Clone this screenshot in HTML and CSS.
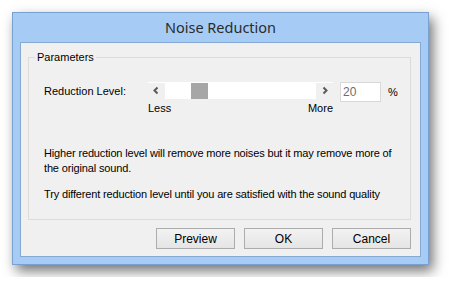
FILE: index.html
```html
<!DOCTYPE html>
<html>
  <head>
    <title>Noise Reduction</title>
    <link rel="stylesheet" href="styles.css">
  </head>
  <body>
    <div class="window">
      <div class="titlebar">Noise Reduction</div>
      <div class="client">
        <fieldset class="group">
          <legend>Parameters</legend>
          <div class="level-row">
            <span class="level-label">Reduction Level:</span>
            <div class="scroll">
              <span class="arrow">
                <svg width="17" height="16" viewBox="0 0 17 16"><polyline points="9.5,4.5 6.5,7.5 9.5,10.5" fill="none" stroke="#5a5a5a" stroke-width="2"/></svg>
              </span>
              <div class="track"><span class="thumb"></span></div>
              <span class="arrow">
                <svg width="17" height="16" viewBox="0 0 17 16"><polyline points="7.5,4.5 10.5,7.5 7.5,10.5" fill="none" stroke="#5a5a5a" stroke-width="2"/></svg>
              </span>
            </div>
            <input class="level-input" type="text" value="20">
            <span class="percent">%</span>
          </div>
          <div class="scale">
            <span>Less</span>
            <span>More</span>
          </div>
          <p class="note">Higher reduction level will remove more noises but it may remove more of the original sound.</p>
          <p class="note second">Try different reduction level until you are satisfied with the sound quality</p>
        </fieldset>
        <div class="buttons">
          <button type="button">Preview</button>
          <button type="button">OK</button>
          <button type="button">Cancel</button>
        </div>
      </div>
    </div>
  </body>
</html>
```

FILE: styles.css
```css
body {
  margin: 0;
  padding: 12px;
  background: #fff;
  font-family: "Liberation Sans", Arial, sans-serif;
  font-size: 11px;
  color: #000;
}

.window {
  width: 401px;
  height: 251px;
  border: 1px solid #7aa0cf;
  background: #a6cbf5;
  padding: 0 7px;
  box-shadow: 4px 6px 12px rgba(0, 0, 0, 0.55);
}

.titlebar {
  height: 29px;
  line-height: 29px;
  text-align: center;
  font-family: "Noto Sans", sans-serif;
  font-size: 14.5px;
  color: #2b2b2b;
}

.client {
  height: 213px;
  border: 1px solid #86a9d3;
  background: #f0f0f0;
  padding: 0 9px 0 7px;
}

.group {
  margin: 8px 0 0;
  padding: 0 0 0 15px;
  height: 169px;
  border: 1px solid #dcdcdc;
  box-sizing: border-box;
}

.group legend {
  margin-left: -9px;
  padding: 0 2px;
  line-height: 13px;
}

.level-row {
  display: flex;
  align-items: center;
  margin-top: 18px;
  height: 20px;
}

.level-label {
  width: 104px;
  margin-bottom: 3px;
}

.scroll {
  display: flex;
  width: 185px;
  height: 16px;
  border-top: 1px solid #fff;
  margin-bottom: 3px;
}

.arrow {
  width: 17px;
  height: 16px;
  background: #f0f0f0;
}

.arrow svg {
  display: block;
}

.track {
  flex: 1;
  background: #fff;
}

.thumb {
  display: block;
  width: 17px;
  height: 16px;
  margin-left: 26px;
  background: #a6a6a6;
}

.level-input {
  width: 41px;
  height: 20px;
  box-sizing: border-box;
  margin: 0 0 0 7px;
  padding: 0 2px;
  border: 1px solid #d9d9d9;
  background: #fff;
  color: #6d6d6d;
  font-family: "Liberation Sans", Arial, sans-serif;
  font-size: 12px;
}

.percent {
  margin-left: 7px;
}

.scale {
  display: flex;
  justify-content: space-between;
  width: 185px;
  margin: 0 0 0 104px;
  line-height: 13px;
}

.note {
  margin: 31px 0 0;
  width: 350px;
  line-height: 15px;
  letter-spacing: -0.15px;
}

.note.second {
  margin-top: 11px;
}

.buttons {
  display: flex;
  justify-content: flex-end;
  gap: 9px;
  margin-top: 8px;
}

.buttons button {
  width: 79px;
  height: 21px;
  border: 1px solid #acacac;
  background: linear-gradient(#f2f2f2, #e5e5e5);
  font-family: "Liberation Sans", Arial, sans-serif;
  font-size: 12px;
  color: #000;
  padding: 0;
}
```
